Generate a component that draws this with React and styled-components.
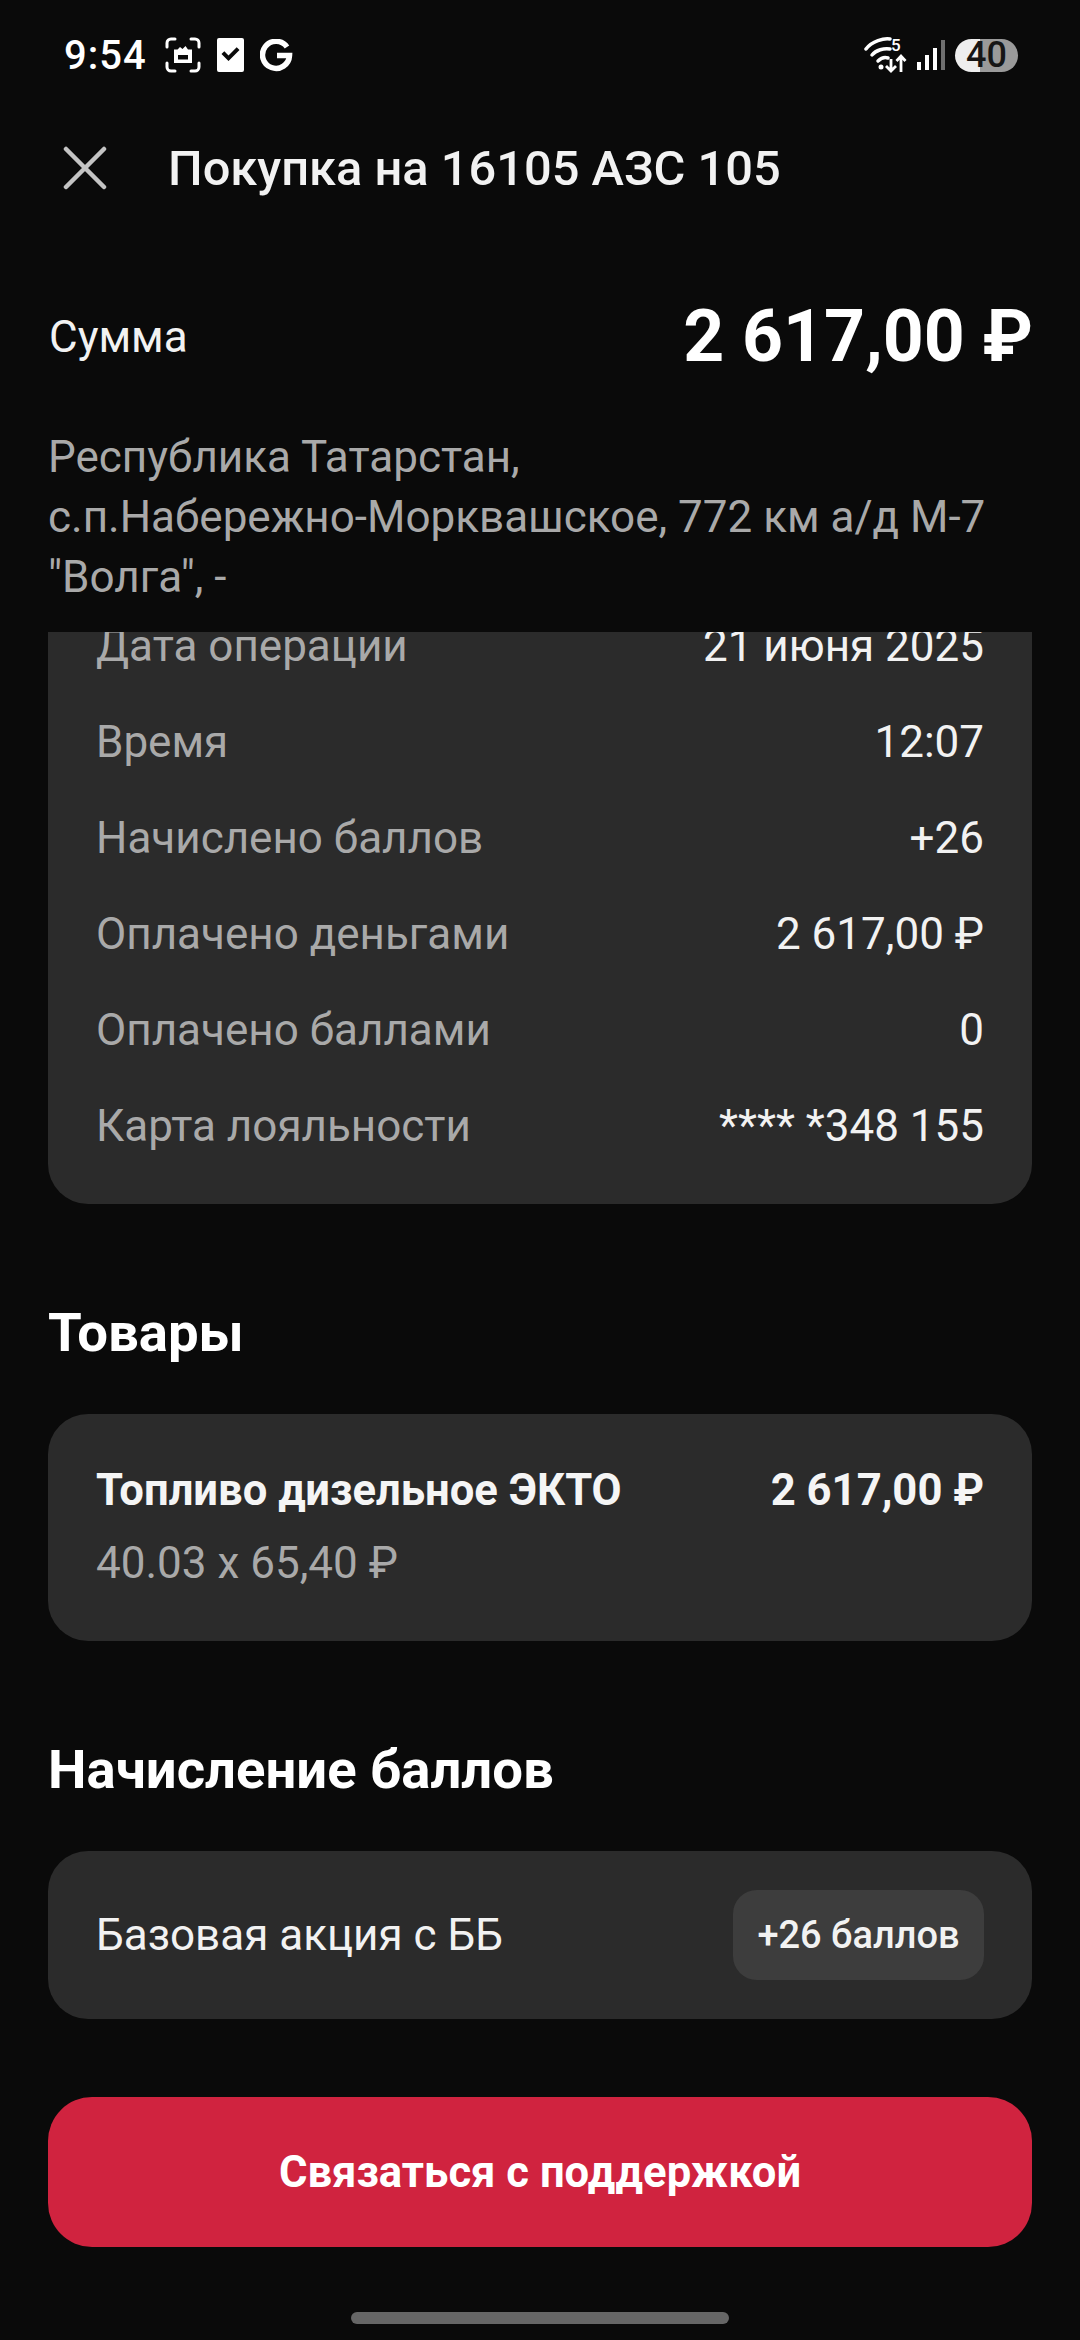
import React from 'react';
import styled, { createGlobalStyle } from 'styled-components';

const GlobalStyle = createGlobalStyle`
  html, body {
    margin: 0;
    padding: 0;
    background: #0a0a0a;
  }
  * {
    box-sizing: border-box;
  }
`;

const DETAILS = [
  { label: 'Дата операции', value: '21 июня 2025' },
  { label: 'Время', value: '12:07' },
  { label: 'Начислено баллов', value: '+26' },
  { label: 'Оплачено деньгами', value: '2 617,00 ₽' },
  { label: 'Оплачено баллами', value: '0' },
  { label: 'Карта лояльности', value: '**** *348 155' },
];

const ScreenshotIcon = () => (
  <svg width="36" height="36" viewBox="0 0 36 36" fill="none">
    <path d="M2 10V6a4 4 0 0 1 4-4h4M26 2h4a4 4 0 0 1 4 4v4M34 26v4a4 4 0 0 1-4 4h-4M10 34H6a4 4 0 0 1-4-4v-4" stroke="#fff" strokeWidth="3" strokeLinecap="round" />
    <path d="M9 12.500h3.500l2.500-2.500 2.500 2 3-3 2.500 3.500H27V26H9zM13 22.500h10V18H13z" fill="#fff" fillRule="evenodd" />
  </svg>
);

const CheckIcon = () => (
  <svg width="27" height="34" viewBox="0 0 27 34">
    <path fillRule="evenodd" fill="#fff" d="M2 0h23a2 2 0 0 1 2 2v30a2 2 0 0 1-2 2H2a2 2 0 0 1-2-2V2a2 2 0 0 1 2-2zM4.500 16l2.800-2.800 4.200 4.200 8.200-8.200 2.800 2.800-11 11z" />
  </svg>
);

const GoogleIcon = () => (
  <svg width="33" height="33" viewBox="0 0 33 33" fill="none">
    <path d="M27 8a13.500 13.500 0 1 0 2.500 8.500H17" stroke="#fff" strokeWidth="5.500" />
  </svg>
);

const WifiIcon = () => (
  <svg width="43" height="38" viewBox="0 0 43 38" fill="none">
    <path d="M2 13C8 5 20 2 26 3" stroke="#fff" strokeWidth="3.500" strokeLinecap="round" />
    <path d="M8 19c4-5 12-7 18-6" stroke="#fff" strokeWidth="3.500" strokeLinecap="round" />
    <path d="M14 25c3-3 7-4 10-3" stroke="#fff" strokeWidth="3.500" strokeLinecap="round" />
    <circle cx="17" cy="31" r="2.500" fill="#fff" />
    <path d="M27 23v12M22 30l5 5 5-5" stroke="#fff" strokeWidth="2.800" />
    <path d="M37 36V20M32.500 25l4.500-5 4.500 5" stroke="#fff" strokeWidth="2.800" />
    <text x="27" y="15" fill="#fff" fontSize="17" fontWeight="500" fontFamily="Roboto, sans-serif">5</text>
  </svg>
);

const SignalIcon = () => (
  <svg width="28" height="30" viewBox="0 0 28 30">
    <rect x="0" y="22" width="4" height="8" fill="#fff" />
    <rect x="8" y="15" width="4" height="15" fill="#fff" />
    <rect x="16" y="8" width="4" height="22" fill="#fff" />
    <rect x="24" y="0" width="4" height="30" fill="#6f6f6f" />
  </svg>
);

const CloseIcon = () => (
  <svg width="44" height="44" viewBox="0 0 44 44" fill="none">
    <path d="M3 3l38 38M41 3L3 41" stroke="#c4c4c4" strokeWidth="4.500" strokeLinecap="round" />
  </svg>
);

const App = () => {
  return (
    <Screen>
      <GlobalStyle />
      <StatusBar>
        <StatusLeft>
          <Time>9:54</Time>
          <ScreenshotIcon />
          <CheckIcon />
          <GoogleIcon />
        </StatusLeft>
        <StatusRight>
          <WifiIcon />
          <SignalIcon />
          <Battery>40</Battery>
        </StatusRight>
      </StatusBar>

      <TopBar>
        <CloseIcon />
        <Title>Покупка на 16105 АЗС 105</Title>
      </TopBar>

      <SumRow>
        <SumLabel>Сумма</SumLabel>
        <SumValue>2 617,00 ₽</SumValue>
      </SumRow>

      <Address>
        Республика Татарстан,<br />
        с.п.Набережно-Морквашское, 772 км а/д М-7<br />
        "Волга", -
      </Address>

      <Scroller>
        <DetailsCard>
          {DETAILS.map(({ label, value }) => (
            <DetailRow key={label}>
              <Muted>{label}</Muted>
              <Value>{value}</Value>
            </DetailRow>
          ))}
        </DetailsCard>

        <SectionTitle>Товары</SectionTitle>
        <GoodsCard>
          <GoodsTop>
            <GoodsName>Топливо дизельное ЭКТО</GoodsName>
            <GoodsName>2 617,00 ₽</GoodsName>
          </GoodsTop>
          <Muted>40.03 x 65,40 ₽</Muted>
        </GoodsCard>

        <SectionTitle>Начисление баллов</SectionTitle>
        <BonusCard>
          <Value>Базовая акция с ББ</Value>
          <BonusBadge>+26 баллов</BonusBadge>
        </BonusCard>

        <SupportButton>Связаться с поддержкой</SupportButton>
      </Scroller>

      <HomeArea>
        <HomeBar />
      </HomeArea>
    </Screen>
  );
};

export default App;

const Screen = styled.div`
  width: 1080px;
  height: 2340px;
  display: flex;
  flex-direction: column;
  overflow: hidden;
  background: #0a0a0a;
  color: #fff;
  font-family: Roboto, "Noto Sans", sans-serif;
`;

const StatusBar = styled.div`
  height: 110px;
  flex: none;
  display: flex;
  justify-content: space-between;
  align-items: center;
  padding: 0 62px 0 64px;
`;

const StatusLeft = styled.div`
  display: flex;
  align-items: center;
  gap: 16px;
`;

const Time = styled.span`
  font-size: 40px;
  font-weight: 500;
  letter-spacing: 1px;
  margin-right: 2px;
`;

const StatusRight = styled.div`
  display: flex;
  align-items: center;
  gap: 10px;
`;

const Battery = styled.div`
  width: 63px;
  height: 33px;
  border-radius: 17px;
  background: linear-gradient(to right, #eeeeee 0 40%, #9a9a9a 40% 100%);
  color: #161616;
  font-size: 36px;
  font-weight: 500;
  line-height: 33px;
  text-align: center;
`;

const TopBar = styled.div`
  height: 116px;
  flex: none;
  display: flex;
  align-items: center;
  gap: 61px;
  padding-left: 63px;
`;

const Title = styled.h1`
  margin: 0;
  font-size: 48.8px;
  font-weight: 500;
  color: #f2f2f2;
`;

const SumRow = styled.div`
  height: 201px;
  flex: none;
  display: flex;
  justify-content: space-between;
  align-items: center;
  padding: 20px 47px 0 49px;
`;

const SumLabel = styled.span`
  font-size: 44px;
  color: #f2f2f2;
`;

const SumValue = styled.span`
  font-size: 71.5px;
  font-weight: 700;
`;

const Address = styled.div`
  height: 205px;
  flex: none;
  padding: 0 48px;
  font-size: 44px;
  line-height: 60px;
  color: #a9a9a9;
`;

const Scroller = styled.div`
  flex: 1;
  min-height: 0;
  overflow: hidden;
  padding: 0 48px;
`;

const DetailsCard = styled.div`
  margin-top: -50px;
  padding: 16px 48px 30px;
  border-radius: 40px;
  background: #2b2b2b;
`;

const DetailRow = styled.div`
  height: 96px;
  display: flex;
  justify-content: space-between;
  align-items: center;
`;

const Muted = styled.span`
  font-size: 44px;
  color: #a9a9a9;
`;

const Value = styled.span`
  font-size: 44px;
  color: #f2f2f2;
`;

const SectionTitle = styled.h2`
  margin: 0;
  height: 210px;
  padding-top: 98px;
  font-size: 54.5px;
  line-height: 60px;
  font-weight: 700;
  color: #fff;
`;

const GoodsCard = styled.div`
  height: 227px;
  padding: 51px 48px 0;
  display: flex;
  flex-direction: column;
  gap: 20px;
  border-radius: 40px;
  background: #2b2b2b;
  line-height: 52px;
`;

const GoodsTop = styled.div`
  display: flex;
  justify-content: space-between;
`;

const GoodsName = styled.span`
  font-size: 43.6px;
  font-weight: 700;
  color: #f5f5f5;
`;

const BonusCard = styled.div`
  height: 168px;
  padding: 0 48px;
  display: flex;
  justify-content: space-between;
  align-items: center;
  border-radius: 40px;
  background: #2b2b2b;
`;

const BonusBadge = styled.div`
  width: 251px;
  height: 90px;
  display: flex;
  justify-content: center;
  align-items: center;
  border-radius: 24px;
  background: #3d3d3d;
  font-size: 38px;
  font-weight: 500;
  color: #f2f2f2;
`;

const SupportButton = styled.button`
  display: block;
  width: 100%;
  height: 150px;
  margin-top: 78px;
  border: none;
  border-radius: 44px;
  background: #d0233f;
  color: #fff;
  font-family: inherit;
  font-size: 43.6px;
  font-weight: 700;
`;

const HomeArea = styled.div`
  height: 93px;
  flex: none;
  display: flex;
  justify-content: center;
  padding-top: 65px;
`;

const HomeBar = styled.div`
  width: 378px;
  height: 12px;
  border-radius: 6px;
  background: #666666;
`;
